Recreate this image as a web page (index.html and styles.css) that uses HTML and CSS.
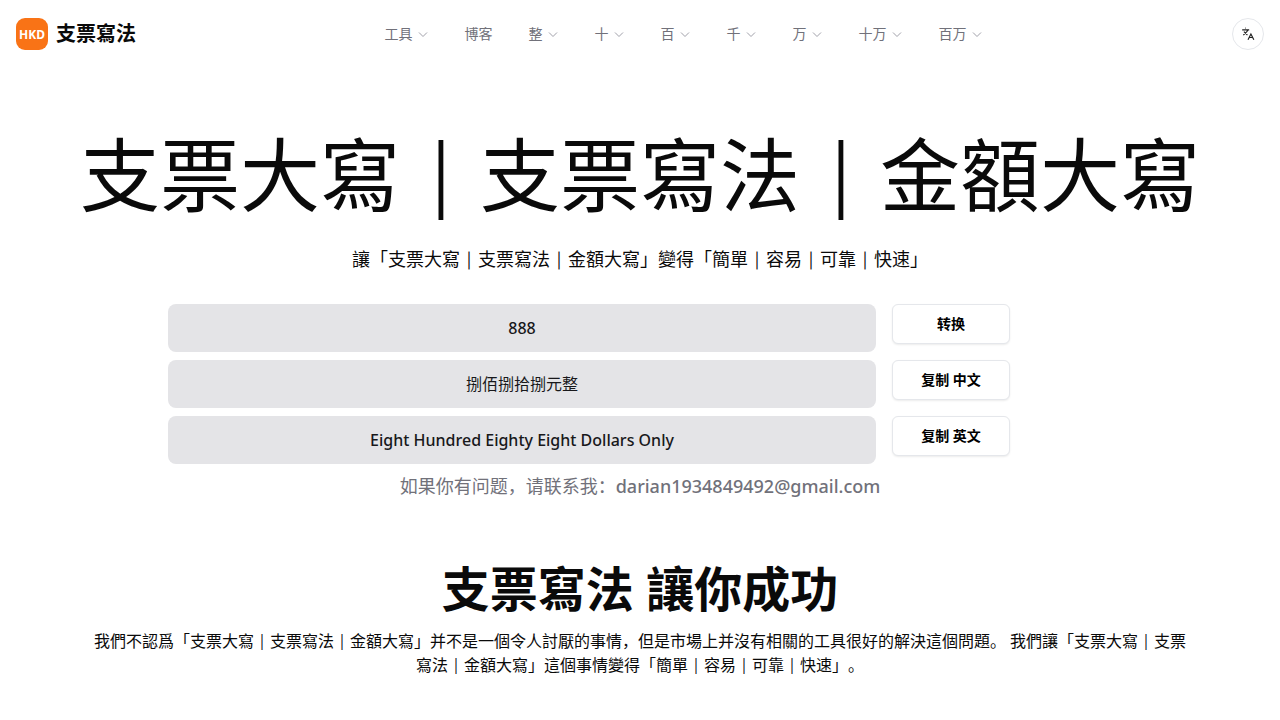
FILE: index.html
```html
<!DOCTYPE html>
<html>
<head>
<meta charset="utf-8">
<title>支票寫法</title>
<link rel="stylesheet" href="styles.css">
</head>
<body>
<header class="topbar">
  <a class="brand">
    <span class="logo">HKD</span>
    <span class="brand-name">支票寫法</span>
  </a>
  <nav class="nav">
    <a class="nav-item">工具<svg class="chev" viewBox="0 0 12 12"><path d="M2 4.5l4 4 4-4"/></svg></a>
    <a class="nav-item">博客</a>
    <a class="nav-item">整<svg class="chev" viewBox="0 0 12 12"><path d="M2 4.5l4 4 4-4"/></svg></a>
    <a class="nav-item">十<svg class="chev" viewBox="0 0 12 12"><path d="M2 4.5l4 4 4-4"/></svg></a>
    <a class="nav-item">百<svg class="chev" viewBox="0 0 12 12"><path d="M2 4.5l4 4 4-4"/></svg></a>
    <a class="nav-item">千<svg class="chev" viewBox="0 0 12 12"><path d="M2 4.5l4 4 4-4"/></svg></a>
    <a class="nav-item">万<svg class="chev" viewBox="0 0 12 12"><path d="M2 4.5l4 4 4-4"/></svg></a>
    <a class="nav-item">十万<svg class="chev" viewBox="0 0 12 12"><path d="M2 4.5l4 4 4-4"/></svg></a>
    <a class="nav-item">百万<svg class="chev" viewBox="0 0 12 12"><path d="M2 4.5l4 4 4-4"/></svg></a>
  </nav>
  <button class="lang" aria-label="language">
    <svg viewBox="0 0 24 24" class="lang-icon"><path d="M5 8l6 6M4 14l6-6 2-3M2 5h12M7 2h1"/><path d="M22 22l-5-10-5 10M14 18h6"/></svg>
  </button>
</header>
<main class="main">
  <h1 class="title">支票大寫<span class="bar">｜</span>支票寫法<span class="bar">｜</span>金額大寫</h1>
  <p class="subtitle">讓「支票大寫<span class="bar">｜</span>支票寫法<span class="bar">｜</span>金額大寫」變得「簡單<span class="bar">｜</span>容易<span class="bar">｜</span>可靠<span class="bar">｜</span>快速」</p>
  <section class="converter">
    <div class="row"><div class="field">888</div><button class="btn">转换</button></div>
    <div class="row"><div class="field field-cjk">捌佰捌拾捌元整</div><button class="btn">复制 中文</button></div>
    <div class="row"><div class="field">Eight Hundred Eighty Eight Dollars Only</div><button class="btn">复制 英文</button></div>
  </section>
  <p class="contact"><span class="contact-cjk">如果你有问题，请联系我：</span>darian1934849492@gmail.com</p>
  <h2 class="headline">支票寫法 讓你成功</h2>
  <p class="desc">我們不認爲「支票大寫<span class="bar">｜</span>支票寫法<span class="bar">｜</span>金額大寫」并不是一個令人討厭的事情，但是市場上并沒有相關的工具很好的解決這個問題。 我們讓「支票大寫<span class="bar">｜</span>支票寫法<span class="bar">｜</span>金額大寫」這個事情變得「簡單<span class="bar">｜</span>容易<span class="bar">｜</span>可靠<span class="bar">｜</span>快速」。</p>
</main>
</body>
</html>
```
FILE: styles.css
```css
* { box-sizing: border-box; }
html, body { margin: 0; padding: 0; }
body {
  height: 720px;
  overflow: hidden;
  background: #fff;
  color: #0a0a0a;
  font-family: "Noto Sans", "Noto Sans CJK SC", sans-serif;
  text-spacing-trim: space-all;
}
.bar {
  display: inline-block;
  width: 1em;
  text-align: center;
  font-family: "Noto Sans", sans-serif;
  line-height: 1;
  vertical-align: .06em;
}
.topbar {
  display: flex;
  align-items: center;
  justify-content: space-between;
  height: 68px;
  padding: 0 16px;
}
.brand { display: flex; align-items: center; gap: 8px; width: 136px; }
.logo {
  width: 32px;
  height: 32px;
  border-radius: 9px;
  background: #f97316;
  color: #fff;
  font-size: 12px;
  font-weight: 700;
  display: flex;
  align-items: center;
  justify-content: center;
}
.brand-name { font-size: 20px; font-weight: 700; line-height: 28px; }
.nav { display: flex; align-items: center; gap: 36px; margin-left: -17px; }
.nav-item {
  display: flex;
  align-items: center;
  gap: 4px;
  font-size: 14px;
  line-height: 20px;
  color: #71717a;
}
.chev { width: 12px; height: 12px; fill: none; stroke: #a1a1aa; stroke-width: 1; }
.lang {
  width: 32px;
  height: 32px;
  padding: 0;
  border: 1px solid #e5e7eb;
  border-radius: 50%;
  background: #fff;
  display: flex;
  align-items: center;
  justify-content: center;
}
.lang-icon { width: 14px; height: 14px; fill: none; stroke: #222; stroke-width: 2; }
.main { display: flex; flex-direction: column; align-items: center; }
.title {
  margin: 50px 0 0;
  font-size: 80px;
  line-height: 112px;
  font-weight: 400;
  white-space: nowrap;
}
.subtitle { margin: 15px 0 0; font-size: 18px; line-height: 28px; }
.converter {
  margin: 31px 0 0;
  width: 944px;
  display: flex;
  flex-direction: column;
  gap: 8px;
}
.row { display: flex; gap: 16px; align-items: flex-start; width: 842px; }
.field {
  flex: 1;
  height: 48px;
  border-radius: 8px;
  background: #e4e4e7;
  font-size: 16px;
  font-weight: 500;
  line-height: 48px;
  text-align: center;
  color: #18181b;
}
.field-cjk { font-weight: 400; }
.btn {
  width: 118px;
  height: 40px;
  padding: 0 0 2px;
  border: 1px solid #e5e7eb;
  border-radius: 6px;
  background: #fff;
  box-shadow: 0 1px 2px rgba(0,0,0,.08);
  font: 700 14px "Noto Sans", "Noto Sans CJK SC", sans-serif;
  color: #000;
}
.contact { margin: 8px 0 0; font-size: 18px; line-height: 28px; color: #71717a; font-weight: 500; }
.contact-cjk { font-weight: 400; }
.headline { margin: 57px 0 0; font-size: 48px; line-height: 64px; font-weight: 700; }
.desc {
  margin: 8px 0 0;
  width: 1100px;
  font-size: 16px;
  line-height: 24px;
  text-align: center;
}
```
